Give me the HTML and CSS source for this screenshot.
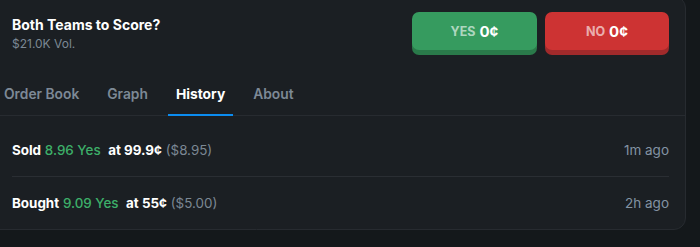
FILE: index.html
```html
<!DOCTYPE html>
<html>
<head>
<meta charset="utf-8">
<link rel="stylesheet" href="styles.css">
</head>
<body>
<div class="card">
  <div class="header">
    <div class="market">
      <div class="title">Both Teams to Score?</div>
      <div class="vol">$21.0K Vol.</div>
    </div>
    <div class="actions">
      <button class="btn btn-yes"><span class="lbl">YES</span> <span class="price">0¢</span></button>
      <button class="btn btn-no"><span class="lbl">NO</span> <span class="price">0¢</span></button>
    </div>
  </div>
  <div class="tabs">
    <div class="tab">Order Book</div>
    <div class="tab">Graph</div>
    <div class="tab active">History</div>
    <div class="tab">About</div>
  </div>
  <div class="list">
    <div class="row">
      <div class="desc"><b>Sold</b> <span class="qty">8.96 Yes</span>&nbsp; <b>at 99.9¢</b> <span class="muted">($8.95)</span></div>
      <div class="time">1m ago</div>
    </div>
    <div class="row">
      <div class="desc"><b>Bought</b> <span class="qty">9.09 Yes</span>&nbsp; <b>at 55¢</b> <span class="muted">($5.00)</span></div>
      <div class="time">2h ago</div>
    </div>
  </div>
</div>
</body>
</html>
```
FILE: styles.css
```css
html, body {
  margin: 0;
  padding: 0;
  background: #14181b;
  overflow: hidden;
  font-family: Inter, "Noto Sans", sans-serif;
}
.card {
  margin: -4px 0 0 -12px;
  width: 698px;
  box-sizing: border-box;
  height: 234px;
  background: #1b1f23;
  border: 1px solid #272b30;
  border-radius: 12px;
}
.header {
  display: flex;
  justify-content: space-between;
  align-items: flex-start;
  padding: 15px 16px 0 23px;
}
.market { margin-top: 3px; }
.title {
  color: #ffffff;
  font-size: 14px;
  font-weight: 700;
  line-height: 20px;
}
.vol {
  margin-top: 1px;
  color: #7c8894;
  font-size: 12px;
  line-height: 16px;
}
.actions {
  display: flex;
  gap: 8px;
}
.btn {
  border: none;
  width: 125px;
  height: 38px;
  margin-bottom: 5px;
  border-radius: 7px;
  font-family: Inter, "Noto Sans", sans-serif;
  display: flex;
  align-items: center;
  justify-content: center;
  gap: 4px;
  padding: 0;
  color: #fff;
}
.btn-yes { background: #369b5f; box-shadow: 0 5px 0 #2a7a4a; }
.btn-no { background: #cd3333; box-shadow: 0 5px 0 #a12a2b; width: 124px; }
.lbl {
  font-size: 12.5px;
  font-weight: 700;
  color: rgba(255,255,255,0.62);
}
.price {
  font-size: 15px;
  font-weight: 700;
}
.tabs {
  display: flex;
  gap: 12px;
  margin-top: 20px;
  padding-left: 7px;
  border-bottom: 1px solid #272b30;
}
.tab {
  padding: 9px 8px 10px;
  margin-bottom: -1px;
  border-bottom: 2px solid transparent;
  color: #7d8996;
  font-size: 13.8px;
  font-weight: 600;
  line-height: 20px;
}
.tab.active {
  color: #ffffff;
  font-weight: 700;
  border-bottom-color: #0b8cf0;
}
.list {
  padding-top: 8px;
}
.row {
  display: flex;
  justify-content: space-between;
  align-items: center;
  height: 52px;
  margin: 0 16px 0 23px;
  font-size: 13.4px;
}
.row + .row { border-top: 1px solid #2a2e33; }
.desc b { color: #fff; font-weight: 700; }
.qty { color: #3daf69; font-weight: 500; }
.muted { color: #7c8894; }
.time { color: #8393a3; font-size: 13.5px; }
```
